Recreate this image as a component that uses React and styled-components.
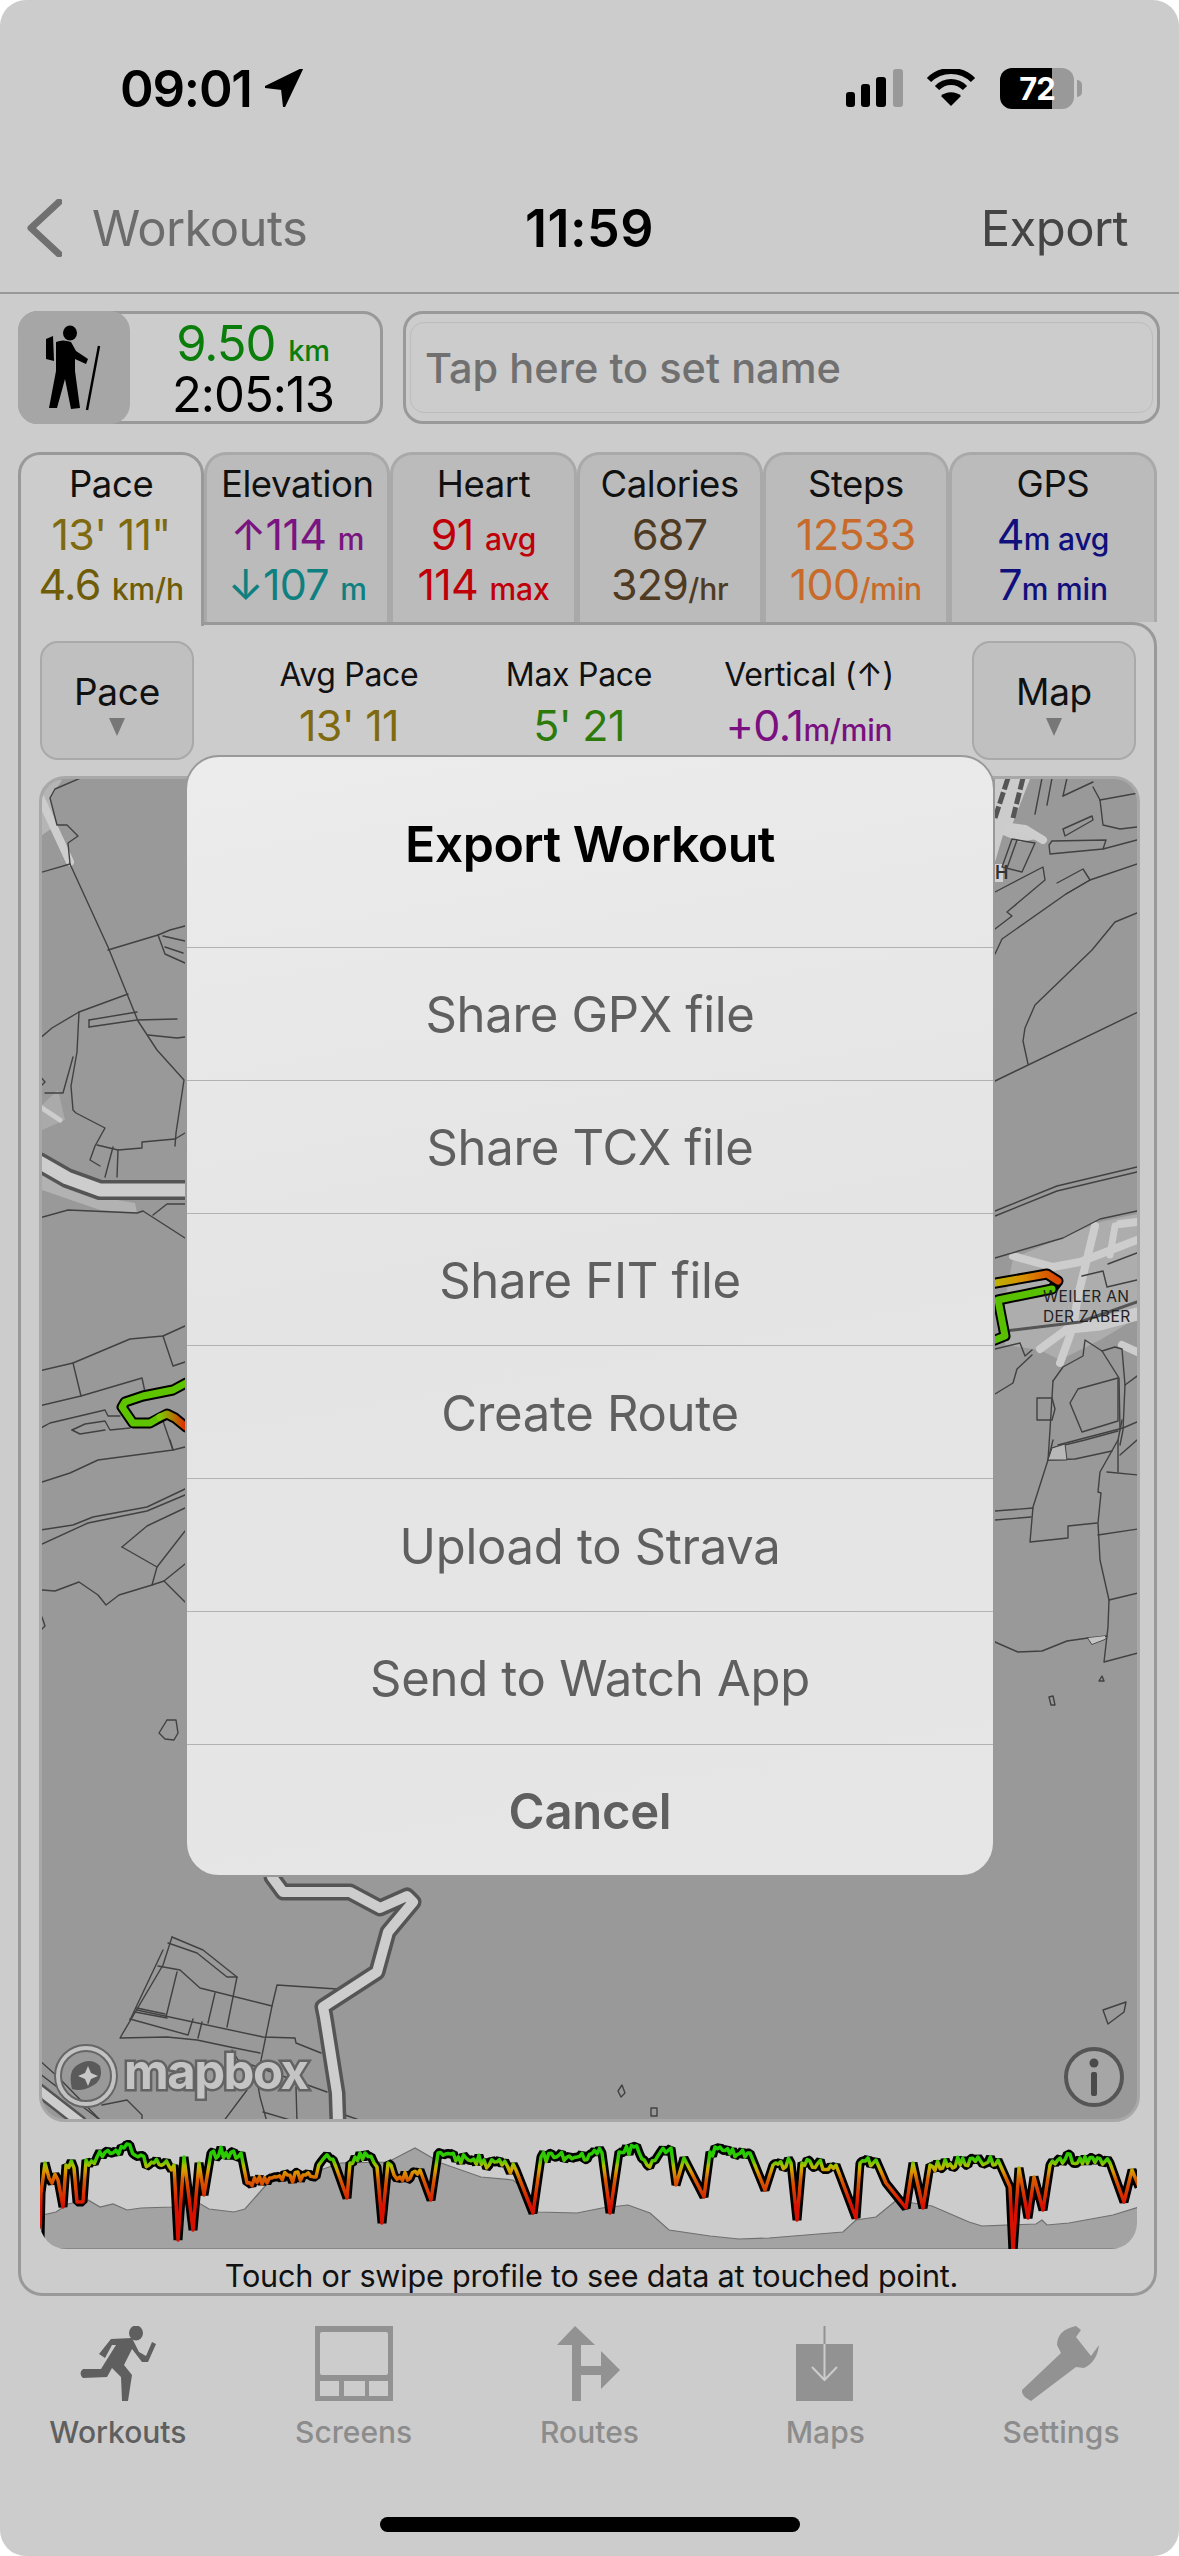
import React from 'react';
import styled, { createGlobalStyle } from 'styled-components';

const GlobalStyle = createGlobalStyle`
  html, body {
    margin: 0;
    padding: 0;
    background: #fff;
  }
  * {
    box-sizing: border-box;
  }
`;

const Page = styled.div`
  position: relative;
  display: flex;
  flex-direction: column;
  width: 1179px;
  height: 2556px;
  overflow: hidden;
  border-radius: 26px;
  background: #cccccc;
  font-family: Inter, "Liberation Sans", sans-serif;
  color: #000;
`;

const StatusBar = styled.div`
  display: flex;
  justify-content: space-between;
  align-items: center;
  height: 176px;
  padding: 0 105px 0 120px;
  flex: none;
`;
const Clock = styled.div`
  display: flex;
  align-items: center;
  gap: 13px;
  font-size: 51px;
  font-weight: 600;
  letter-spacing: -1.2px;
`;
const StatusIcons = styled.div`
  display: flex;
  align-items: center;
`;
const Battery = styled.div`
  position: relative;
  display: flex;
  align-items: center;
  justify-content: center;
  width: 74px;
  height: 41px;
  margin-left: 24px;
  border-radius: 12px;
  background: linear-gradient(90deg, #000 70%, #999 70%);
  color: #fff;
  font-size: 31px;
  font-weight: 700;
  letter-spacing: -1px;
  &::after {
    content: '';
    position: absolute;
    right: -8px;
    top: 12px;
    width: 5px;
    height: 17px;
    border-radius: 0 5px 5px 0;
    background: #999;
  }
`;

const NavBar = styled.div`
  display: grid;
  grid-template-columns: 1fr auto 1fr;
  align-items: center;
  height: 118px;
  padding: 0 26px 12px;
  border-bottom: 2px solid #999;
  flex: none;
`;
const BackLink = styled.div`
  display: flex;
  align-items: center;
  gap: 30px;
  font-size: 49px;
  letter-spacing: -0.6px;
  color: #6c6c6c;
`;
const NavTitle = styled.div`
  font-size: 52px;
  font-weight: 600;
  letter-spacing: 0.5px;
`;
const NavAction = styled.div`
  justify-self: end;
  padding-right: 25px;
  font-size: 49px;
  letter-spacing: -0.6px;
  color: #444;
`;

const SummaryRow = styled.div`
  display: flex;
  gap: 20px;
  height: 113px;
  margin-top: 17px;
  padding: 0 19px 0 18px;
  flex: none;
`;
const WorkoutBox = styled.div`
  display: flex;
  width: 365px;
  border: 3px solid #999;
  border-radius: 20px;
`;
const ActivityIcon = styled.div`
  display: flex;
  align-items: center;
  justify-content: center;
  width: 112px;
  margin: -3px 0 -3px -3px;
  border-radius: 20px;
  background: #a6a6a6;
  flex: none;
`;
const WorkoutStats = styled.div`
  display: flex;
  flex: 1;
  flex-direction: column;
  align-items: center;
  justify-content: center;
  padding: 2px 4px 0 0;
  font-size: 49px;
  line-height: 51px;
  letter-spacing: -1px;
`;
const Distance = styled.div`
  color: #0a7d0a;
`;
const NameBox = styled.div`
  display: flex;
  flex: 1;
  padding: 8px 4px 8px;
  border: 3px solid #999;
  border-radius: 20px;
`;
const NameField = styled.div`
  display: flex;
  flex: 1;
  align-items: center;
  padding-left: 14px;
  border: 1px solid #bcbcbc;
  border-radius: 14px;
  font-size: 41.5px;
  font-weight: 500;
  color: #707070;
`;

const Main = styled.div`
  display: flex;
  flex-direction: column;
  margin: 28px 22px 0 18px;
  flex: none;
`;
const Tabs = styled.div`
  display: grid;
  grid-template-columns: repeat(5, 186.2px) 1fr;
  height: 170px;
`;
const Tab = styled.div`
  position: relative;
  z-index: ${(p) => (p.$active ? 2 : 1)};
  display: flex;
  flex-direction: column;
  align-items: center;
  height: ${(p) => (p.$active ? '174px' : '170px')};
  padding-top: 4px;
  border: 3px solid ${(p) => (p.$active ? '#999' : '#a9a9a9')};
  border-bottom: 0;
  border-radius: 22px 22px 0 0;
  background: ${(p) => (p.$active ? '#cccccc' : '#bbbbbb')};
`;
const TabLabel = styled.div`
  font-size: 36.5px;
  line-height: 50px;
  letter-spacing: -0.4px;
  color: #111;
`;
const Value = styled.div`
  font-size: ${(p) => p.$size || 43}px;
  line-height: 50px;
  letter-spacing: -0.7px;
  white-space: nowrap;
  color: ${(p) => p.$color};
`;
const Unit = styled.span`
  font-size: ${(p) => p.$size || 30}px;
  font-weight: 500;
  line-height: 1;
  letter-spacing: -0.2px;
`;

const Panel = styled.div`
  display: flex;
  flex-direction: column;
  height: 1674px;
  padding: 16px 14px 0 18px;
  border: 3px solid #999;
  border-radius: 0 24px 24px 24px;
`;
const Controls = styled.div`
  display: flex;
  justify-content: space-between;
  height: 119px;
  padding: 0 4px 0 1px;
  flex: none;
`;
const PickerButton = styled.div`
  display: flex;
  flex-direction: column;
  align-items: center;
  width: ${(p) => p.$width}px;
  padding-top: 25px;
  border: 2px solid #a9a9a9;
  border-radius: 18px;
  background: #c0c0c0;
  font-size: 37px;
  line-height: 48px;
  letter-spacing: -0.3px;
  color: #111;
  &::after {
    content: '';
    width: 0;
    height: 0;
    margin-top: 2px;
    border-style: solid;
    border-width: 18px 8px 0;
    border-color: #777 transparent transparent;
  }
`;
const Stats = styled.div`
  display: grid;
  grid-template-columns: repeat(3, 230px);
  padding-top: 9px;
  margin-right: 8px;
`;
const Stat = styled.div`
  display: flex;
  flex-direction: column;
  align-items: center;
`;
const StatLabel = styled.div`
  font-size: 32px;
  line-height: 50px;
  letter-spacing: -0.3px;
  color: #111;
`;

const MapFrame = styled.div`
  height: 1346px;
  margin-top: 16px;
  border: 3px solid #a8a8a8;
  border-radius: 26px;
  overflow: hidden;
  background: #999;
  flex: none;
  svg {
    display: block;
  }
`;
const Profile = styled.div`
  height: 109px;
  margin: 18px 3px 0 1px;
  border-radius: 0 0 26px 26px;
  overflow: hidden;
  flex: none;
  svg {
    display: block;
  }
`;
const Caption = styled.div`
  margin-top: 3px;
  padding-left: 4px;
  font-size: 30.6px;
  line-height: 47px;
  letter-spacing: -0.2px;
  text-align: center;
  white-space: nowrap;
  color: #111;
`;

const TabBar = styled.div`
  display: grid;
  grid-template-columns: repeat(5, 235.8px);
  height: 150px;
  padding-top: 30px;
  flex: none;
`;
const TabItem = styled.div`
  display: flex;
  flex-direction: column;
  align-items: center;
  gap: 12px;
  font-size: 30px;
  font-weight: 500;
  line-height: 36px;
  color: ${(p) => (p.$active ? '#5f5f5f' : '#8c8c8c')};
`;
const HomeBar = styled.div`
  width: 420px;
  height: 15px;
  margin: 71px auto 0;
  border-radius: 8px;
  background: #000;
  flex: none;
`;

const Dialog = styled.div`
  position: absolute;
  left: 185px;
  top: 755px;
  z-index: 5;
  display: flex;
  flex-direction: column;
  width: 810px;
  height: 1122px;
  border: 2px solid #999;
  border-radius: 34px;
  overflow: hidden;
  background: linear-gradient(170deg, #ececec 0%, #e4e4e4 45%, #e6e6e6 100%);
`;
const DialogTitle = styled.div`
  display: flex;
  align-items: center;
  justify-content: center;
  height: 190px;
  padding-bottom: 16px;
  font-size: 50px;
  font-weight: 600;
  letter-spacing: -0.5px;
  flex: none;
`;
const DialogRow = styled.div`
  display: flex;
  align-items: center;
  justify-content: center;
  height: 132.8px;
  padding-top: 2px;
  border-top: 1.5px solid #b2b2b2;
  font-size: 49px;
  font-weight: ${(p) => (p.$bold ? 600 : 400)};
  letter-spacing: -0.3px;
  color: #5f5f5f;
  flex: none;
`;

const tabs = [
  { label: 'Pace', a: <Value $color="#7f6a10">13' 11"</Value>, b: <Value $color="#6f5c08">4.6 <Unit>km/h</Unit></Value> },
  { label: 'Elevation', a: <Value $color="#7a1480">↑114 <Unit>m</Unit></Value>, b: <Value $color="#0f8080">↓107 <Unit>m</Unit></Value> },
  { label: 'Heart', a: <Value $color="#c00008">91 <Unit>avg</Unit></Value>, b: <Value $color="#c00008">114 <Unit>max</Unit></Value> },
  { label: 'Calories', a: <Value $color="#4f3a22">687</Value>, b: <Value $color="#4f3a22">329<Unit>/hr</Unit></Value> },
  { label: 'Steps', a: <Value $color="#c86a2a">12533</Value>, b: <Value $color="#c86a2a">100<Unit>/min</Unit></Value> },
  { label: 'GPS', a: <Value $color="#10107c">4<Unit>m avg</Unit></Value>, b: <Value $color="#10107c">7<Unit>m min</Unit></Value> },
];

const exportOptions = ['Share GPX file', 'Share TCX file', 'Share FIT file', 'Create Route', 'Upload to Strava', 'Send to Watch App'];

// map lines, in page coordinates (the svg viewBox starts at the map's corner)
const thinLines = [
  '83,777 55,789 50,798 57,825 67,825 78,836 68,843 70,864 39,873',
  '70,864 108,947 138,1021 157,1050 184,1080 176,1133 175,1146',
  '108,950 158,935 170,930 185,926',
  '158,935 165,954 185,963',
  '163,936 185,941',
  '165,947 183,953',
  '39,1039 52,1028 79,1012 128,994',
  '79,1012 77,1052 71,1086 73,1110 76,1113 105,1128 95,1146 90,1160 100,1166',
  '89,1020 137,1012',
  '89,1027 137,1020 177,1019',
  '89,1020 89,1027',
  '148,1035 177,1038 185,1037',
  '39,1075 45,1082 39,1088',
  '45,1093 63,1093 73,1057',
  '97,1145 118,1150 142,1148 142,1142 175,1139 185,1133',
  '118,1150 117,1177',
  '113,1147 105,1177',
  '39,1218 68,1210 137,1213 143,1211 185,1238',
  '153,1215 167,1204 185,1204',
  '39,1371 73,1363 130,1339 163,1336 185,1326',
  '163,1336 173,1366 185,1362',
  '73,1363 81,1396 142,1378 145,1392',
  '39,1406 81,1396',
  '39,1429 50,1423 105,1410 108,1416 120,1416',
  '72,1430 85,1424 105,1421 110,1430 130,1428',
  '72,1430 80,1434 105,1430',
  '163,1421 173,1450',
  '42,1482 70,1473 98,1460 173,1450 185,1447',
  '170,1440 173,1450',
  '40,1530 73,1525 93,1517 147,1507 185,1489',
  '42,1544 88,1523 147,1511 185,1495',
  '122,1547 147,1526 185,1508',
  '122,1547 157,1567 185,1531',
  '157,1567 152,1585',
  '42,1590 55,1591 79,1582 98,1595 106,1605 119,1595 152,1585 164,1581 185,1564',
  '164,1581 185,1602',
  '167,1720 176,1720 178,1733 174,1740 165,1739 159,1733 167,1720',
  '42,1617 45,1626 42,1629',

  '1063,796 1067,778',
  '1063,796 1093,782',
  '1100,800 1103,825 1120,829 1137,827',
  '1100,800 1138,793',
  '1093,787 1100,800',
  '1035,814 1042,778',
  '1047,805 1052,778',
  '1012,839 1002,867 1022,872 1035,843 1012,839',
  '1017,840 1007,868',
  '1063,829 1092,816 1093,820 1065,836 1063,829',
  '1052,841 1106,840 1103,849 1050,854 1049,845 1052,841',
  '1103,849 1137,840',
  '995,892 1043,867 1045,880 1007,912 1012,916 995,929',
  '1057,883 1083,869 1090,880 1066,894',
  '995,954 1002,939 1066,894 1090,880 1140,863',
  '1137,913 1115,922 1092,950 1035,1005 1025,1028 1023,1041 1028,1064',
  '995,1081 1140,1011',
  '995,1211 1057,1186 1137,1167',
  '995,1216 1057,1191 1137,1172',
  '995,1258 1063,1238 1100,1219 1137,1211',
  '1082,1276 1103,1271 1107,1287 1137,1280',
  '1108,1264 1137,1253',
  '995,1349 1020,1343 1025,1356 1032,1350',
  '995,1394 1013,1383 1017,1369 1032,1355',
  '1053,1381 1063,1367 1083,1356 1085,1340 1102,1351 1115,1347 1122,1349 1125,1385 1123,1430 1120,1445',
  '1102,1351 1119,1378 1120,1430',
  '1053,1381 1050,1430 1048,1460',
  '1078,1389 1118,1378 1118,1421 1082,1432 1070,1403 1078,1389',
  '1037,1398 1052,1398 1055,1409 1052,1420 1037,1420 1037,1398',
  '1058,1445 1123,1428',
  '1125,1385 1137,1376',
  '1123,1428 1137,1422',
  '1053,1440 1048,1460 1033,1507 1030,1542 1068,1538 1068,1526 1097,1523',
  '995,1511 1033,1508',
  '995,1520 1031,1517',
  '1048,1460 1075,1459 1112,1451',
  '1052,1448 1085,1440 1118,1431',
  '1122,1420 1118,1440 1100,1472 1098,1492 1101,1493 1098,1523 1100,1560 1109,1600 1108,1627 1104,1662 1138,1653',
  '1109,1600 1138,1593',
  '1098,1535 1138,1529',
  '1107,1472 1138,1475',
  '1118,1440 1118,1472',
  '1120,1455 1137,1440',
  '995,1642 1018,1652 1042,1651 1067,1641 1088,1638 1107,1636',
  '1088,1638 1092,1644 1105,1639',
  '1099,1681 1102,1676 1104,1681 1099,1681',
  '1049,1697 1053,1696 1055,1705 1051,1705 1049,1697',
  '618,2091 622,2085 625,2093 621,2097 618,2091',
  '651,2108 657,2108 657,2116 651,2116 651,2108',
  '1103,2010 1126,2002 1124,2012 1108,2024 1103,2010',

  '172,1937 203,1950 237,1977 227,2027',
  '172,1937 163,1965 120,2038 167,2037 197,2040 230,2047 260,2053',
  '168,1943 197,1953 227,1977 237,1977',
  '163,1950 130,2020',
  '158,1966 180,1970 200,1988 272,2006 277,1985 337,1989',
  '177,1972 166,2017',
  '137,2008 165,2014',
  '135,2012 167,2018',
  '137,2010 263,2037 295,2038 296,2043 321,2053',
  '130,2019 188,2035 193,2019',
  '215,1993 208,2023',
  '202,2022 198,2038',
  '272,2006 257,2080 260,2097 267,2122',
  '232,2050 238,2060 327,2092',
  '247,2090 223,2122',
  '296,2087 297,2122',
  '263,2112 297,2122',
  '345,2115 365,2122',
  '102,2105 127,2100 142,2115 142,2122',
  '39,2060 58,2077 102,2122',
  '39,2073 100,2120',
];

const lightRoads = [
  { d: '39,795 70,862', w: 8 },
  { d: '1010,827 1025,829 1043,840', w: 8 },
  { d: '1013,1256 1053,1267 1080,1262 1137,1240', w: 8 },
  { d: '1095,1226 1078,1296 1073,1327 1060,1363', w: 8 },
  { d: '1070,1327 1100,1324 1137,1314', w: 13 },
  { d: '1040,1349 1070,1327', w: 8 },
  { d: '1120,1224 1137,1222', w: 8 },
  { d: '1115,1226 1110,1255', w: 7 },
  { d: '1122,1345 1137,1352', w: 8 },
  { d: '42,1108 60,1120', w: 5 },
];

const buildTrace = (keys) => {
  let seed = 11;
  const rand = () => {
    seed = (seed * 16807) % 2147483647;
    return (seed % 1000) / 1000 - 0.5;
  };
  const points = [];
  keys.forEach(([x, y], i) => {
    points.push([x, y]);
    const next = keys[i + 1];
    if (!next) return;
    const dx = next[0] - x;
    const dy = next[1] - y;
    if (Math.abs(dy) > 20 || dx < 8) return;
    const steps = Math.floor(dx / 2.5);
    for (let s = 1; s < steps; s += 1) {
      const t = s / steps;
      points.push([(x + dx * t).toFixed(1), (y + dy * t + rand() * 12).toFixed(1)]);
    }
  });
  return points.map((p) => p.join(',')).join(' ');
};

const traceKeys = [
  [40, 2240], [41, 2193], [45, 2163], [49, 2178], [58, 2180], [63, 2207], [66, 2165], [74, 2168], [77, 2202], [83, 2202],
  [86, 2160], [97, 2157], [124, 2148], [141, 2155], [149, 2165], [174, 2165], [178, 2240], [184, 2157], [193, 2230], [199, 2163],
  [204, 2195], [211, 2153], [241, 2153], [247, 2183], [277, 2177], [316, 2177], [324, 2158], [336, 2167], [347, 2198], [350, 2163],
  [365, 2153], [377, 2167], [382, 2223], [388, 2163], [400, 2177], [420, 2170], [431, 2200], [438, 2153], [466, 2158], [502, 2165],
  [516, 2170], [533, 2213], [541, 2157], [577, 2157], [602, 2153], [610, 2213], [619, 2152], [634, 2147], [647, 2165], [671, 2148],
  [676, 2185], [684, 2158], [704, 2197], [710, 2152], [750, 2153], [765, 2190], [773, 2165], [791, 2163], [797, 2220], [802, 2163],
  [836, 2165], [856, 2218], [860, 2163], [876, 2160], [886, 2183], [906, 2208], [913, 2163], [923, 2208], [930, 2165], [998, 2160],
  [1010, 2187], [1013, 2252], [1019, 2168], [1028, 2218], [1034, 2177], [1043, 2210], [1050, 2165], [1060, 2158], [1110, 2163],
  [1124, 2202], [1132, 2170], [1139, 2187],
];

const elevation =
  '40,2249 40,2243 43,2215 56,2212 68,2204 88,2200 100,2207 113,2204 127,2210 141,2208 172,2207 199,2203 209,2209 234,2212 245,2209 266,2185 281,2177 320,2170 341,2163 388,2162 415,2148 441,2163 481,2177 513,2180 527,2192 538,2212 577,2213 602,2208 628,2205 650,2213 669,2230 710,2236 739,2239 769,2238 843,2232 856,2220 876,2217 898,2199 913,2203 932,2206 969,2222 982,2226 1036,2224 1042,2220 1047,2225 1069,2223 1113,2215 1139,2207 1139,2249';

const NavArrow = () => (
  <svg width="38" height="38" viewBox="0 0 38 38">
    <path d="M37 0 L0 18 L17 20 L19 38 Z" fill="#000" stroke="#000" strokeWidth="2" strokeLinejoin="round" />
  </svg>
);

const SignalBars = () => (
  <svg width="58" height="38" viewBox="0 0 58 38">
    <rect x="0" y="23" width="9" height="15" rx="3" fill="#000" />
    <rect x="15" y="15" width="9" height="23" rx="3" fill="#000" />
    <rect x="30" y="8" width="10" height="30" rx="3" fill="#000" />
    <rect x="47" y="0" width="10" height="38" rx="3" fill="#999" />
  </svg>
);

const WifiGlyph = styled.svg`
  margin-left: 22px;
`;

const WifiIcon = () => (
  <WifiGlyph width="50" height="38" viewBox="0 0 50 38">
    <path d="M3 11 C15 -1 35 -1 47 11" fill="none" stroke="#000" strokeWidth="6" />
    <path d="M11 19 C19 11 31 11 39 19" fill="none" stroke="#000" strokeWidth="6" />
    <path d="M25 37 L15 27 C20 22 30 22 35 27 Z" fill="#000" />
  </WifiGlyph>
);

const BackChevron = () => (
  <svg width="36" height="58" viewBox="0 0 36 58">
    <path d="M33 3 L5 29 L33 55" fill="none" stroke="#707070" strokeWidth="7" strokeLinecap="round" strokeLinejoin="round" />
  </svg>
);

const HikerIcon = () => (
  <svg width="66" height="90" viewBox="44 324 66 90">
    <ellipse cx="73" cy="334" rx="7" ry="7.5" fill="#000" />
    <path d="M49 340 L56 337 L57 362 L49 360 Z" fill="#000" />
    <path d="M59 343 Q66 340 74 343 L79 352 L91 360 L89 365 L78 360 L78 372 L83 409 L74 410 L68 380 L60 409 L52 409 L59 372 Z" fill="#000" />
    <path d="M102 347 L90 411" stroke="#000" strokeWidth="2.5" fill="none" />
  </svg>
);

const RunnerIcon = () => (
  <svg width="78" height="76" viewBox="80 2326 78 76">
    <ellipse cx="137" cy="2333" rx="7" ry="7.5" fill="#5f5f5f" />
    <path d="M112 2339 L133 2338 L140 2352 L147 2356 L153 2342 L157 2344 L149 2362 L143 2362 L133 2349 L125 2365 L133 2375 L129 2401 L123 2401 L122 2377 L113 2368 L108 2377 L84 2378 Q79 2373 84 2369 L102 2369 L117 2345 L113 2345 L106 2358 L100 2354 Z" fill="#5f5f5f" />
  </svg>
);

const ScreensIcon = () => (
  <svg width="78" height="76" viewBox="314 2326 78 76">
    <path
      fillRule="evenodd"
      d="M314 2326 H392 V2401 H314 Z M321 2332 Q319 2332 319 2334 V2373 Q319 2375 321 2375 H385 Q387 2375 387 2373 V2334 Q387 2332 385 2332 Z M319 2381 V2396 H338 V2381 Z M343 2381 V2396 H364 V2381 Z M368 2381 V2396 H387 V2381 Z"
      fill="#929292"
    />
  </svg>
);

const RoutesIcon = () => (
  <svg width="64" height="76" viewBox="559 2326 64 76">
    <path d="M577 2326 L597 2345 L583 2345 L583 2366 L603 2366 L603 2351 L622 2370 L603 2389 L603 2375 L583 2375 L583 2401 L574 2401 L574 2345 L559 2345 Z" fill="#929292" />
  </svg>
);

const MapsIcon = () => (
  <svg width="58" height="76" viewBox="795 2326 58 76">
    <rect x="795" y="2344" width="57" height="57" fill="#929292" />
    <path d="M823.5 2326 V2344" stroke="#929292" strokeWidth="2" />
    <path d="M823.5 2344 V2379 M811 2367 L823.5 2380 L836 2367" stroke="#cccccc" strokeWidth="2" fill="none" />
  </svg>
);

const SettingsIcon = () => (
  <svg width="80" height="76" viewBox="1020 2326 80 76">
    <path d="M1075 2326 Q1056 2330 1056 2345 L1060 2353 L1021 2390 Q1020 2396 1030 2401 L1075 2367 L1083 2368 Q1096 2362 1098 2345 L1090 2356 L1075 2337 L1080 2330 Z" fill="#929292" />
  </svg>
);

const polyProps = { fill: 'none', strokeLinejoin: 'round', strokeLinecap: 'round' };

const MapDrawing = () => (
  <svg width="1095" height="1340" viewBox="42 779 1095 1340">
    <defs>
      <linearGradient id="routeEnd" gradientUnits="userSpaceOnUse" x1="160" y1="0" x2="186" y2="0">
        <stop offset="0" stopColor="#7fc800" />
        <stop offset="1" stopColor="#e02a00" />
      </linearGradient>
      <linearGradient id="routeRight" gradientUnits="userSpaceOnUse" x1="990" y1="0" x2="1055" y2="0">
        <stop offset="0" stopColor="#b8b800" />
        <stop offset="0.5" stopColor="#d89000" />
        <stop offset="1" stopColor="#d84a00" />
      </linearGradient>
    </defs>

    <path d="M42 780 H62 L50 798 L57 825 L42 835 Z" fill="#b5b5b5" />
    <path d="M42 1105 L58 1090 L65 1120 L42 1130 Z" fill="#aaaaaa" />
    <path d="M42 1190 L100 1210 L137 1213 L135 1203 L100 1197 L42 1172 Z" fill="#b2b2b2" />
    <path d="M995 779 H1030 L1012 825 L1042 838 L1020 842 L1003 835 L995 862 Z" fill="#cccccc" />
    <path d="M1013 1258 L1100 1222 L1137 1214 V1318 L1100 1340 L1060 1360 L1040 1350 L1005 1345 L1005 1300 Z" fill="#adadad" />
    <rect x="995" y="864" width="8" height="18" fill="#d2d2d2" />
    <text x="995" y="879" fontFamily="Inter, sans-serif" fontSize="18" fontWeight="600" fill="#333">H</text>

    {lightRoads.map((r) => (
      <polyline key={r.d} points={r.d} stroke="#cdcdcd" strokeWidth={r.w} {...polyProps} />
    ))}

    <polyline points="1008,778 995,818" stroke="#555" strokeWidth="5" strokeDasharray="12 3" fill="none" />
    <polyline points="1023,778 1013,818" stroke="#555" strokeWidth="5" strokeDasharray="12 3" fill="none" />
    <polyline points="1005,1331 1080,1322 1137,1302" stroke="#555" strokeWidth="3" {...polyProps} />

    {thinLines.map((d) => (
      <polyline key={d} points={d} stroke="#414141" strokeWidth="1.4" {...polyProps} />
    ))}

    <polygon points="1052,1448 1065,1444 1067,1460 1048,1460" fill="#b8b8b8" stroke="#414141" strokeWidth="1" />
    <polygon points="1088,1638 1092,1644 1105,1639 1105,1636" fill="#c4c4c4" />

    <polyline points="39,1162 67,1178 100,1190 190,1190" stroke="#555" strokeWidth="20" {...polyProps} />
    <polyline points="39,1162 67,1178 100,1190 190,1190" stroke="#cdcdcd" strokeWidth="13" {...polyProps} />

    <polyline points="272,1877 283,1892 350,1892 380,1908 407,1896 413,1902 388,1932 377,1972 323,2007 325,2017 337,2093 338,2122" stroke="#555" strokeWidth="17" {...polyProps} />
    <polyline points="272,1877 283,1892 350,1892 380,1908 407,1896 413,1902 388,1932 377,1972 323,2007 325,2017 337,2093 338,2122" stroke="#cdcdcd" strokeWidth="10" {...polyProps} />
    <polyline points="39,2090 80,2122" stroke="#555" strokeWidth="14" {...polyProps} />
    <polyline points="39,2090 80,2122" stroke="#cdcdcd" strokeWidth="9" {...polyProps} />

    <polyline points="186,1383 173,1390 143,1396 125,1402 122,1407 133,1423 150,1423 167,1414 175,1418 186,1427" stroke="#000" strokeWidth="11" {...polyProps} />
    <polyline points="186,1383 173,1390 143,1396 125,1402 122,1407 133,1423 150,1423 160,1417" stroke="#5fc400" strokeWidth="7" {...polyProps} />
    <polyline points="160,1417 167,1414 175,1418 186,1427" stroke="url(#routeEnd)" strokeWidth="7" {...polyProps} />

    <polyline points="990,1284 1047,1274 1058,1281 1052,1289 998,1300 1005,1336 990,1342" stroke="#000" strokeWidth="11" {...polyProps} />
    <polyline points="990,1284 1047,1274 1058,1281" stroke="url(#routeRight)" strokeWidth="7" {...polyProps} />
    <polyline points="1052,1289 998,1300 1005,1336 990,1342" stroke="#58c000" strokeWidth="7" {...polyProps} />

    <g fontFamily="Inter, sans-serif" fontSize="15.5" fill="#222" letterSpacing="0.3">
      <text x="1043" y="1302">WEILER AN</text>
      <text x="1043" y="1322">DER ZABER</text>
    </g>

    <circle cx="86" cy="2076" r="28" fill="none" stroke="#666" strokeWidth="8" />
    <circle cx="86" cy="2076" r="28" fill="none" stroke="#c2c2c2" strokeWidth="4" />
    <path d="M72 2089 Q68 2072 76 2066 Q90 2056 100 2066 Q104 2080 92 2086 Q82 2092 72 2089 Z" fill="#5a5a5a" />
    <path d="M88 2066 L91 2073 L98 2076 L91 2079 L88 2086 L85 2079 L78 2076 L85 2073 Z" fill="#c8c8c8" />
    <text
      x="124"
      y="2089"
      fontFamily="Inter, sans-serif"
      fontSize="49"
      fontWeight="700"
      letterSpacing="-1.5"
      fill="#c4c4c4"
      stroke="#636363"
      strokeWidth="5"
      paintOrder="stroke"
    >
      mapbox
    </text>

    <circle cx="1094" cy="2077" r="28" fill="#a6a6a6" stroke="#555" strokeWidth="4" />
    <circle cx="1094" cy="2063" r="4.5" fill="#4a4a4a" />
    <rect x="1091" y="2072" width="6" height="24" rx="2" fill="#4a4a4a" />
  </svg>
);

const ProfileChart = () => {
  const trace = buildTrace(traceKeys);
  return (
    <svg width="1097" height="109" viewBox="40 2140 1097 109">
      <defs>
        <linearGradient id="speed" gradientUnits="userSpaceOnUse" x1="0" y1="2150" x2="0" y2="2220">
          <stop offset="0" stopColor="#20cc00" />
          <stop offset="0.14" stopColor="#40c800" />
          <stop offset="0.22" stopColor="#a8c000" />
          <stop offset="0.3" stopColor="#d89c00" />
          <stop offset="0.42" stopColor="#d85c00" />
          <stop offset="0.8" stopColor="#d81000" />
        </linearGradient>
      </defs>
      <polygon points={elevation} fill="#a3a3a3" stroke="#6f6f6f" strokeWidth="1.2" />
      <polyline points={trace} fill="none" stroke="#000" strokeWidth="9" strokeLinejoin="bevel" />
      <polyline points={trace} fill="none" stroke="url(#speed)" strokeWidth="3.5" strokeLinejoin="round" />
    </svg>
  );
};

export default function App() {
  return (
    <>
      <GlobalStyle />
      <Page>
        <StatusBar>
          <Clock>
            09:01
            <NavArrow />
          </Clock>
          <StatusIcons>
            <SignalBars />
            <WifiIcon />
            <Battery>72</Battery>
          </StatusIcons>
        </StatusBar>

        <NavBar>
          <BackLink>
            <BackChevron />
            Workouts
          </BackLink>
          <NavTitle>11:59</NavTitle>
          <NavAction>Export</NavAction>
        </NavBar>

        <SummaryRow>
          <WorkoutBox>
            <ActivityIcon>
              <HikerIcon />
            </ActivityIcon>
            <WorkoutStats>
              <Distance>
                9.50 <Unit $size={29}>km</Unit>
              </Distance>
              <div>2:05:13</div>
            </WorkoutStats>
          </WorkoutBox>
          <NameBox>
            <NameField>Tap here to set name</NameField>
          </NameBox>
        </SummaryRow>

        <Main>
          <Tabs>
            {tabs.map((t, i) => (
              <Tab key={t.label} $active={i === 0}>
                <TabLabel>{t.label}</TabLabel>
                {t.a}
                {t.b}
              </Tab>
            ))}
          </Tabs>
          <Panel>
            <Controls>
              <PickerButton $width={154}>Pace</PickerButton>
              <Stats>
                <Stat>
                  <StatLabel>Avg Pace</StatLabel>
                  <Value $color="#7f6a10">13' 11</Value>
                </Stat>
                <Stat>
                  <StatLabel>Max Pace</StatLabel>
                  <Value $color="#2c7a0a">5' 21</Value>
                </Stat>
                <Stat>
                  <StatLabel>Vertical (↑)</StatLabel>
                  <Value $color="#7a1080">+0.1<Unit>m/min</Unit></Value>
                </Stat>
              </Stats>
              <PickerButton $width={164}>Map</PickerButton>
            </Controls>
            <MapFrame>
              <MapDrawing />
            </MapFrame>
            <Profile>
              <ProfileChart />
            </Profile>
            <Caption>Touch or swipe profile to see data at touched point.</Caption>
          </Panel>
        </Main>

        <TabBar>
          <TabItem $active>
            <RunnerIcon />
            Workouts
          </TabItem>
          <TabItem>
            <ScreensIcon />
            Screens
          </TabItem>
          <TabItem>
            <RoutesIcon />
            Routes
          </TabItem>
          <TabItem>
            <MapsIcon />
            Maps
          </TabItem>
          <TabItem>
            <SettingsIcon />
            Settings
          </TabItem>
        </TabBar>
        <HomeBar />

        <Dialog>
          <DialogTitle>Export Workout</DialogTitle>
          {exportOptions.map((o) => (
            <DialogRow key={o}>{o}</DialogRow>
          ))}
          <DialogRow $bold>Cancel</DialogRow>
        </Dialog>
      </Page>
    </>
  );
}
